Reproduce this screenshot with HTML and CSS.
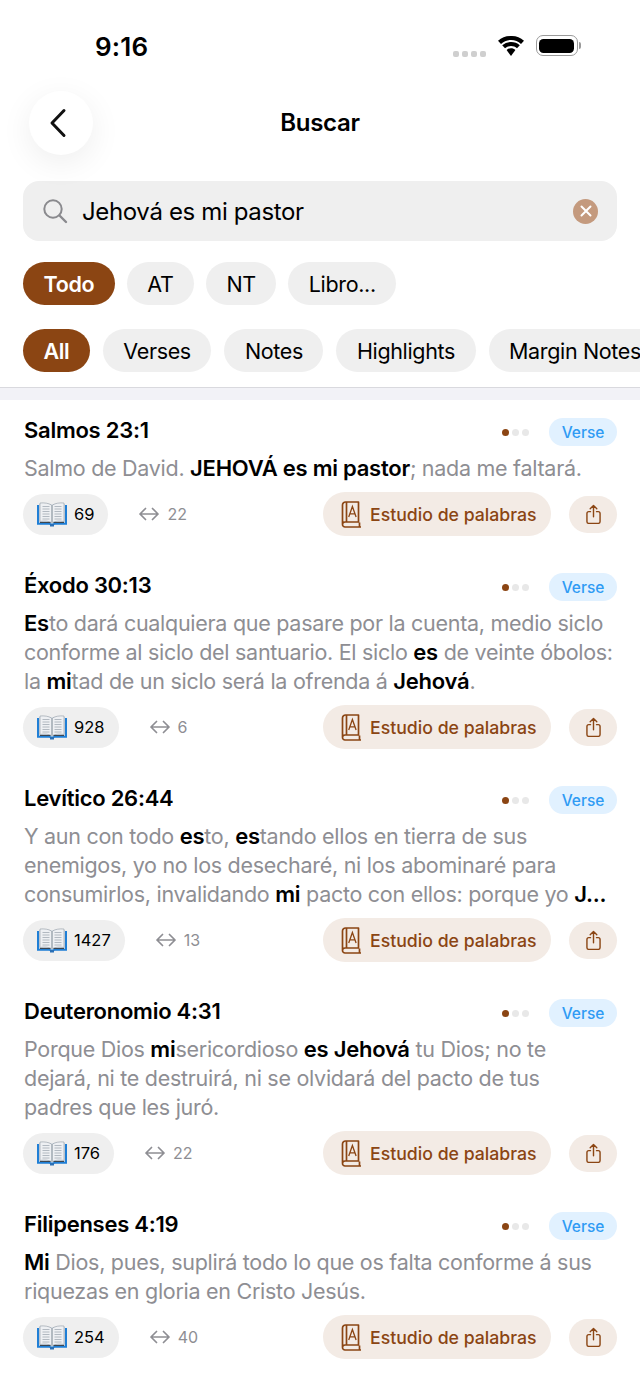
FILE: index.html
```html
<!DOCTYPE html>
<html lang="es">
<head>
  <meta charset="UTF-8">
  <meta name="viewport" content="width=device-width, initial-scale=1.0">
  <title>Buscar</title>
  <link rel="stylesheet" href="styles.css">
</head>
<body>
  <svg class="defs" width="0" height="0">
    <symbol id="bible" viewBox="0 0 30 25">
      <path d="M2 2h12.500v19H2z" fill="#cfd8e2"/>
      <path d="M15.500 2H28v19H15.500z" fill="#cfd8e2"/>
      <path d="M3 1C7.500.6 11.500 1.200 14.500 3v17.500C11.500 19 7.500 18.700 3 19.500z" fill="#eef0f3" stroke="#8f98a3" stroke-width=".6"/>
      <path d="M27 1c-4.500-.4-8.500.2-11.500 2v17.500c3-1.500 7-1.800 11.500-1z" fill="#eef0f3" stroke="#8f98a3" stroke-width=".6"/>
      <path d="M5.500 4.500h7M5.500 7h7M5.500 9.500h7M5.500 12h7M5.500 14.500h7M5.500 17h7M17.500 4.500h7M17.500 7h7M17.500 9.500h7M17.500 12h7M17.500 14.500h7M17.500 17h7" stroke="#aab2bb" stroke-width=".9"/>
      <path d="M1 3v18.800H12c1.200 0 1.800.8 3 .8s1.800-.8 3-.8H29V3" fill="none" stroke="#1f7fd6" stroke-width="2"/>
      <path d="M3 20.500h10.500M16.500 20.500H27" stroke="#3d4650" stroke-width="1"/>
      <path d="M13 22h4v2.500h-4z" fill="#2a6fb5"/>
    </symbol>
    <symbol id="swap" viewBox="0 0 20 14">
      <path d="M6.500 1.500 1 7l5.500 5.500M13.500 1.500 19 7l-5.500 5.500M1 7h18" fill="none" stroke="currentColor" stroke-width="1.700" stroke-linecap="round" stroke-linejoin="round"/>
    </symbol>
    <symbol id="dict" viewBox="0 0 21 27">
      <path d="M1.500 23V4A3 3 0 0 1 4.500 1H17.500V21H4A2.500 2.500 0 0 0 4 26H20M5.500 1V21M18.500 21.500V26" fill="none" stroke="currentColor" stroke-width="1.700" stroke-linejoin="round"/>
      <path d="M7.700 16 11.400 5.500 15.100 16M8.900 12.800H13.900" fill="none" stroke="currentColor" stroke-width="1.300"/>
    </symbol>
    <symbol id="share" viewBox="0 0 16 21">
      <path d="M8 13.500V1.500M4.500 4.800 8 1.300l3.500 3.500M4.800 8H3a2 2 0 0 0-2 2v8.500a2 2 0 0 0 2 2h10a2 2 0 0 0 2-2V10a2 2 0 0 0-2-2h-1.800" fill="none" stroke="currentColor" stroke-width="1.500" stroke-linecap="round" stroke-linejoin="round"/>
    </symbol>
  </svg>

  <div class="app">
    <div class="statusbar">
      <span class="time">9:16</span>
      <div class="status-icons">
        <div class="signal"><i></i><i></i><i></i><i></i></div>
        <svg class="wifi" width="28" height="20" viewBox="0 0 28 20"><path d="M14 4c3.900 0 7.400 1.500 10 4l3-3.200A18.800 18.800 0 0 0 14 0 18.800 18.800 0 0 0 1 4.800L4 8c2.600-2.500 6.100-4 10-4z"/><path d="M14 10c2.300 0 4.400.9 6 2.300l2.800-3A13 13 0 0 0 14 6a13 13 0 0 0-8.800 3.300l2.800 3A9 9 0 0 1 14 10z"/><path d="M14 12.300c-1.700 0-3.200.6-4.400 1.700L14 20l4.400-6c-1.200-1.100-2.700-1.700-4.400-1.700z"/></svg>
        <div class="battery"><div class="battery-fill"></div></div>
        <div class="battery-cap"></div>
      </div>
    </div>

    <header class="nav">
      <button class="back" type="button">
        <svg width="18" height="30" viewBox="0 0 18 30"><path d="M15 2.500 3 15l12 12.500" fill="none" stroke="#111" stroke-width="3" stroke-linecap="round" stroke-linejoin="round"/></svg>
      </button>
      <h1>Buscar</h1>
    </header>

    <div class="search">
      <svg width="26" height="26" viewBox="0 0 26 26"><circle cx="11" cy="11" r="8.700" fill="none" stroke="#8a8a8e" stroke-width="2"/><path d="m17.500 17.500 6.500 6.500" stroke="#8a8a8e" stroke-width="2.400" stroke-linecap="round"/></svg>
      <span class="query">Jehová es mi pastor</span>
      <span class="clear">
        <svg width="12" height="12" viewBox="0 0 12 12"><path d="m1.500 1.500 9 9m0-9-9 9" stroke="#fff" stroke-width="2" stroke-linecap="round"/></svg>
      </span>
    </div>

    <div class="chips chips-books">
      <span class="chip active">Todo</span>
      <span class="chip">AT</span>
      <span class="chip">NT</span>
      <span class="chip">Libro...</span>
    </div>
    <div class="chips chips-types">
      <span class="chip active">All</span>
      <span class="chip">Verses</span>
      <span class="chip">Notes</span>
      <span class="chip">Highlights</span>
      <span class="chip">Margin Notes</span>
    </div>

    <div class="band"></div>

    <article class="card">
      <div class="card-head">
        <h2>Salmos 23:1</h2>
        <div class="dots"><i class="on"></i><i></i><i></i></div>
        <span class="badge">Verse</span>
      </div>
      <p class="verse">Salmo de David. <b>JEHOVÁ es mi pastor</b>; nada me faltará.</p>
      <div class="actions">
        <span class="count"><svg class="bible"><use href="#bible"/></svg>69</span>
        <span class="refs"><svg class="swap"><use href="#swap"/></svg>22</span>
        <span class="study"><svg class="dict"><use href="#dict"/></svg>Estudio de palabras</span>
        <span class="share"><svg class="share-icon"><use href="#share"/></svg></span>
      </div>
    </article>

    <article class="card">
      <div class="card-head">
        <h2>Éxodo 30:13</h2>
        <div class="dots"><i class="on"></i><i></i><i></i></div>
        <span class="badge">Verse</span>
      </div>
      <p class="verse"><b>Es</b>to dará cualquiera que pasare por la cuenta, medio siclo<br>conforme al siclo del santuario. El siclo <b>es</b> de veinte óbolos:<br>la <b>mi</b>tad de un siclo será la ofrenda á <b>Jehová</b>.</p>
      <div class="actions">
        <span class="count"><svg class="bible"><use href="#bible"/></svg>928</span>
        <span class="refs"><svg class="swap"><use href="#swap"/></svg>6</span>
        <span class="study"><svg class="dict"><use href="#dict"/></svg>Estudio de palabras</span>
        <span class="share"><svg class="share-icon"><use href="#share"/></svg></span>
      </div>
    </article>

    <article class="card">
      <div class="card-head">
        <h2>Levítico 26:44</h2>
        <div class="dots"><i class="on"></i><i></i><i></i></div>
        <span class="badge">Verse</span>
      </div>
      <p class="verse">Y aun con todo <b>es</b>to, <b>es</b>tando ellos en tierra de sus<br>enemigos, yo no los desecharé, ni los abominaré para<br>consumirlos, invalidando <b>mi</b> pacto con ellos: porque yo <b>J...</b></p>
      <div class="actions">
        <span class="count"><svg class="bible"><use href="#bible"/></svg>1427</span>
        <span class="refs"><svg class="swap"><use href="#swap"/></svg>13</span>
        <span class="study"><svg class="dict"><use href="#dict"/></svg>Estudio de palabras</span>
        <span class="share"><svg class="share-icon"><use href="#share"/></svg></span>
      </div>
    </article>

    <article class="card">
      <div class="card-head">
        <h2>Deuteronomio 4:31</h2>
        <div class="dots"><i class="on"></i><i></i><i></i></div>
        <span class="badge">Verse</span>
      </div>
      <p class="verse">Porque Dios <b>mi</b>sericordioso <b>es Jehová</b> tu Dios; no te<br>dejará, ni te destruirá, ni se olvidará del pacto de tus<br>padres que les juró.</p>
      <div class="actions">
        <span class="count"><svg class="bible"><use href="#bible"/></svg>176</span>
        <span class="refs"><svg class="swap"><use href="#swap"/></svg>22</span>
        <span class="study"><svg class="dict"><use href="#dict"/></svg>Estudio de palabras</span>
        <span class="share"><svg class="share-icon"><use href="#share"/></svg></span>
      </div>
    </article>

    <article class="card">
      <div class="card-head">
        <h2>Filipenses 4:19</h2>
        <div class="dots"><i class="on"></i><i></i><i></i></div>
        <span class="badge">Verse</span>
      </div>
      <p class="verse"><b>Mi</b> Dios, pues, suplirá todo lo que os falta conforme á sus<br>riquezas en gloria en Cristo Jesús.</p>
      <div class="actions">
        <span class="count"><svg class="bible"><use href="#bible"/></svg>254</span>
        <span class="refs"><svg class="swap"><use href="#swap"/></svg>40</span>
        <span class="study"><svg class="dict"><use href="#dict"/></svg>Estudio de palabras</span>
        <span class="share"><svg class="share-icon"><use href="#share"/></svg></span>
      </div>
    </article>
  </div>
</body>
</html>
```

FILE: styles.css
```css
* {
  box-sizing: border-box;
}
html, body {
  margin: 0;
  padding: 0;
  height: 1391px;
  overflow: hidden;
  background: #fff;
}
body {
  font-family: Inter, "Liberation Sans", sans-serif;
  color: #000;
}
.defs {
  display: block;
  height: 0;
}
.app {
  width: 640px;
  height: 1391px;
  overflow: hidden;
}

/* status bar */
.statusbar {
  height: 91px;
  padding: 30px 59px 0 95px;
  display: flex;
  justify-content: space-between;
  align-items: flex-start;
}
.time {
  font-size: 26px;
  font-weight: 600;
  line-height: 34px;
  letter-spacing: 0.2px;
}
.status-icons {
  display: flex;
  align-items: center;
  height: 34px;
}
.signal {
  display: flex;
  gap: 3px;
  margin: 13px 11px 0 0;
}
.signal i {
  width: 6px;
  height: 6px;
  border-radius: 2px;
  background: #cfcfcf;
}
.wifi {
  margin-right: 11px;
  margin-top: -3px;
}
.battery {
  width: 42px;
  height: 21px;
  padding: 2.500px;
  margin-top: -3px;
  border: 1.500px solid #9a9a9a;
  border-radius: 7px;
}
.battery-fill {
  height: 100%;
  border-radius: 4.500px;
  background: #000;
}
.battery-cap {
  width: 2.500px;
  height: 7px;
  margin: -3px 0 0 1px;
  border-radius: 0 2px 2px 0;
  background: #9a9a9a;
}

/* nav */
.nav {
  height: 64px;
  padding-left: 29px;
  position: relative;
  display: flex;
  align-items: center;
  justify-content: center;
}
.back {
  position: absolute;
  left: 29px;
  top: 0;
  width: 64px;
  height: 64px;
  padding: 0 6px 0 0;
  border: none;
  border-radius: 50%;
  background: #fff;
  box-shadow: 0 8px 32px rgba(0, 0, 0, 0.07);
  display: flex;
  align-items: center;
  justify-content: center;
}
.nav h1 {
  margin: -1px 0 0 -29px;
  font-size: 24px;
  font-weight: 600;
  letter-spacing: -0.3px;
}

/* search */
.search {
  margin: 26px 23px 0 23px;
  height: 60px;
  padding: 0 19px;
  border-radius: 16px;
  background: #efefef;
  display: flex;
  align-items: center;
}
.query {
  flex: 1;
  margin-left: 14px;
  font-size: 24px;
  letter-spacing: -0.36px;
}
.clear {
  width: 25px;
  height: 25px;
  border-radius: 50%;
  background: #c49a7e;
  display: flex;
  align-items: center;
  justify-content: center;
}

/* filter chips */
.chips {
  display: flex;
  padding-left: 23px;
  white-space: nowrap;
}
.chips-books {
  margin-top: 21px;
  gap: 12px;
}
.chips-types {
  margin-top: 24px;
  gap: 13px;
}
.chip {
  flex: none;
  height: 43px;
  padding: 0 20.500px;
  border-radius: 22px;
  background: #efefef;
  font-size: 21.500px;
  line-height: 44px;
  letter-spacing: -0.35px;
}
.chip.active {
  background: #8b4513;
  color: #fff;
  font-weight: 600;
}
.band {
  height: 13px;
  margin-top: 15px;
  border-top: 1px solid #d9d9de;
  background: #f2f2f7;
}

/* result cards */
.card {
  padding: 13px 23px 19px 24px;
}
.card-head {
  height: 34px;
  display: flex;
  align-items: center;
}
.card-head h2 {
  flex: 1;
  margin: 0;
  font-size: 22px;
  font-weight: 600;
  letter-spacing: -0.26px;
}
.dots {
  display: flex;
  gap: 3px;
  margin: 4px 20px 0 0;
}
.dots i {
  width: 7px;
  height: 7px;
  border-radius: 50%;
  background: #e8e8e8;
}
.dots i.on {
  background: #8b4513;
}
.badge {
  width: 68px;
  height: 28px;
  border-radius: 14px;
  margin-top: 4px;
  background: #e1f1ff;
  color: #2f9bf4;
  font-size: 15.500px;
  font-weight: 500;
  line-height: 29px;
  text-align: center;
}
.verse {
  margin: 7px 0 0;
  font-size: 21.500px;
  line-height: 29px;
  letter-spacing: -0.28px;
  color: #8e8e93;
  white-space: nowrap;
}
.verse b {
  font-size: 22px;
  font-weight: 600;
  letter-spacing: -0.25px;
  color: #000;
}
.actions {
  margin-top: 9px;
  height: 44px;
  display: flex;
  align-items: center;
}
.count {
  height: 41px;
  padding: 0 14px;
  border-radius: 21px;
  background: #efefef;
  margin-left: -1px;
  display: flex;
  align-items: center;
  gap: 7px;
  font-size: 16.500px;
}
.bible {
  width: 30px;
  height: 25px;
}
.refs {
  margin-left: 31px;
  display: flex;
  align-items: center;
  gap: 8px;
  color: #8e8e93;
  font-size: 16px;
}
.swap {
  width: 20px;
  height: 14px;
}
.study {
  margin-left: auto;
  height: 44px;
  width: 228px;
  padding-left: 18px;
  border-radius: 22px;
  background: #f3ebe5;
  color: #8b4513;
  font-size: 17.700px;
  font-weight: 500;
  display: flex;
  align-items: center;
  gap: 8px;
}
.dict {
  width: 21px;
  height: 27px;
}
.share {
  margin-left: 18px;
  width: 48px;
  height: 37px;
  border-radius: 19px;
  background: #f3ebe5;
  color: #8b4513;
  display: flex;
  align-items: center;
  justify-content: center;
}
.share-icon {
  width: 15px;
  height: 20px;
}
```
